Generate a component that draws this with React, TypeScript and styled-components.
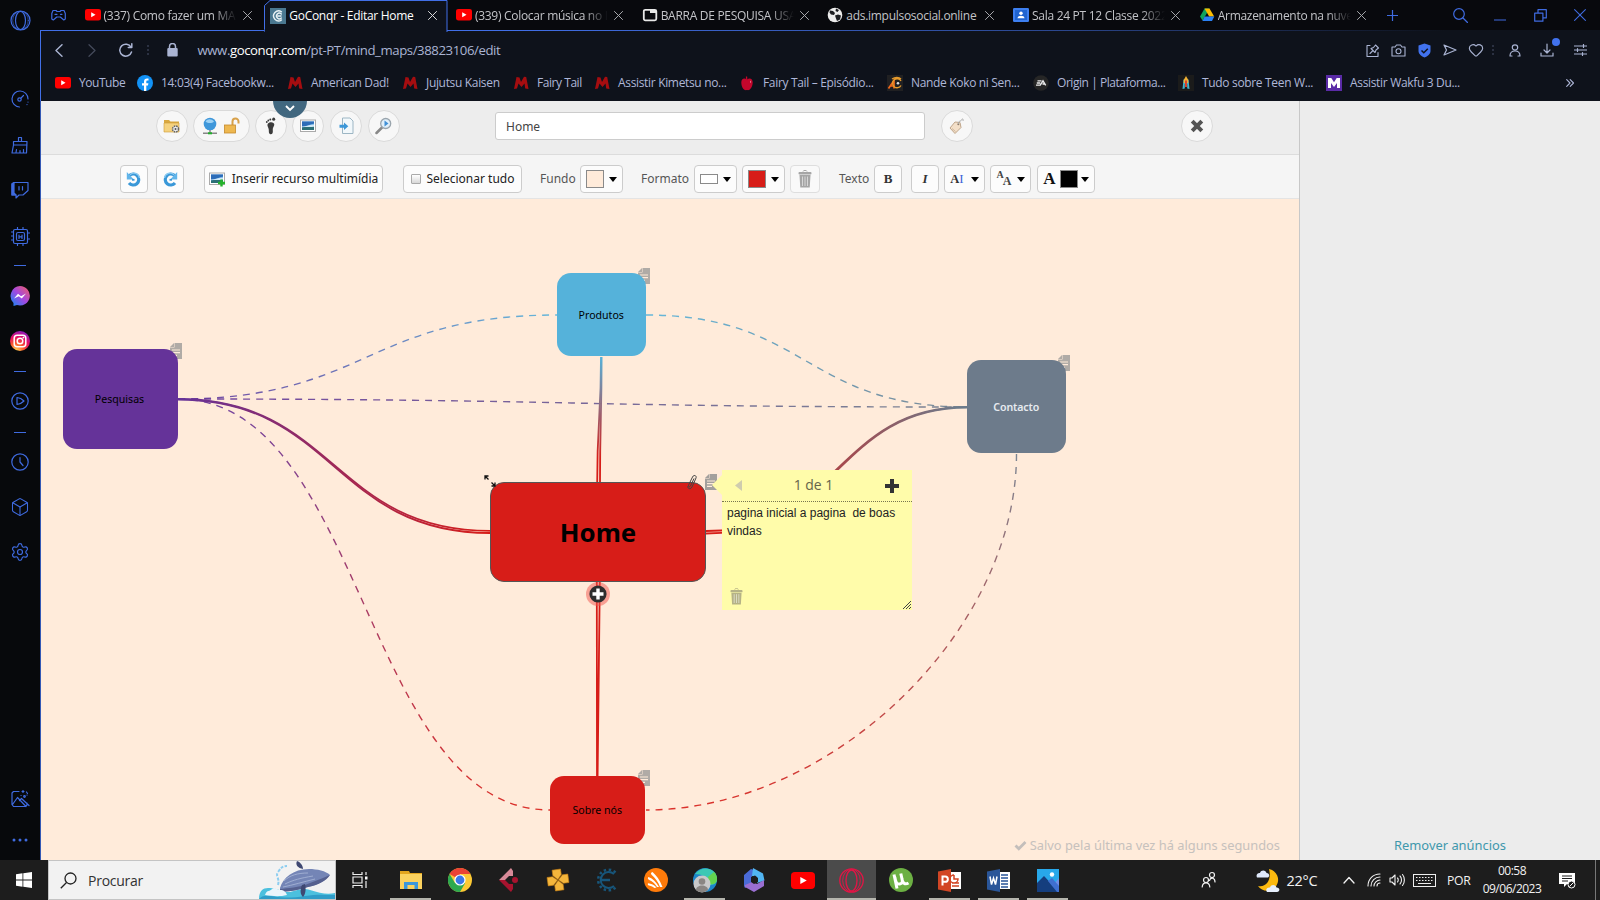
import React from "react";
import styled, { createGlobalStyle, css } from "styled-components";
import { Heart, Settings, Box } from "lucide-react";

const ui = `"Open Sans", "Noto Sans", sans-serif`;
const web = `"Noto Sans", "Open Sans", sans-serif`;
const accent = "#3f6be0";

const Global = createGlobalStyle`
  * { box-sizing: border-box; }
  html, body { margin: 0; padding: 0; overflow: hidden; background: #08090d; }
  svg { display: block; flex: none; }
`;

const Desktop = styled.div`
  width: 1600px; height: 900px; display: flex; flex-direction: column;
  font-family: ${ui}; overflow: hidden;
`;
const Browser = styled.div`display: flex; height: 860px;`;
const Sidebar = styled.nav`
  width: 40px; flex: none; background: #07090c; display: flex; flex-direction: column; align-items: center; color: ${accent};
`;
const SideItem = styled.div<{ $mt: number }>`
  height: 20px; width: 22px; margin-top: ${p => p.$mt}px; display: flex; align-items: center; justify-content: center;
`;
const SideRule = styled.hr`width: 12px; height: 1px; border: 0; margin: 0; background: ${accent};`;
const Window = styled.div`flex: 1; min-width: 0; display: flex; flex-direction: column;`;

const TabStrip = styled.div`height: 30px; background: #08090d; display: flex; align-items: stretch;`;
const GameCorner = styled.div`width: 38.6px; flex: none; padding-right: 2px; display: flex; align-items: center; justify-content: center; color: ${accent};`;
const Tab = styled.div<{ $active?: boolean }>`
  width: 185.7px; flex: none; padding-left: 6px; display: flex; align-items: center; position: relative;
  color: ${p => (p.$active ? "#fff" : "#c3c4c8")};
  ${p => p.$active && css`height: 31px; z-index: 2;`}
`;
const TabShape = styled.svg`position: absolute; left: 0; top: 0; z-index: -1;`;
const TabTitle = styled.span<{ $fade?: boolean }>`
  width: 133px; margin-left: 3px; font-size: 12px; line-height: 18px; white-space: nowrap; overflow: hidden;
  letter-spacing: -.29px; padding-top: 1px;
  ${p => p.$fade && css`-webkit-mask-image: linear-gradient(90deg, #000 82%, transparent 100%); mask-image: linear-gradient(90deg, #000 82%, transparent 100%);`}
`;
const TabClose = styled.div`margin-left: 6px; opacity: .85;`;
const WindowControls = styled.div`display: flex; align-items: center; color: ${accent}; margin-left: 6px;`;
const Control = styled.div<{ $ml: number }>`width: 16px; height: 30px; display: flex; align-items: center; justify-content: center; margin-left: ${p => p.$ml}px;`;

const Chrome = styled.div`
  height: 71px; background: #0e121b; border-left: 1px solid ${accent}; display: flex; flex-direction: column;
  border-top: 1px solid transparent; border-image: linear-gradient(90deg, #416fe8 0, #416fe8 30%, #2b478f 65%, #0e121b 90%) 1; border-right: 0; border-bottom: 0;
`;
const AddressRow = styled.div`height: 38px; display: flex; align-items: center; color: #aab4d3; padding-left: 9.5px;`;
const Slot = styled.div<{ $w?: number; $ml?: number }>`
  width: ${p => p.$w ?? 16}px; margin-left: ${p => p.$ml ?? 0}px; flex: none; display: flex; justify-content: center; align-items: center; position: relative;
`;
const Url = styled.div`
  width: 1147px; margin-left: 17px; font-size: 13.2px; letter-spacing: -.42px; white-space: nowrap; line-height: 20px;
  b { font-weight: 400; color: #fff; }
`;
const Separator = styled.i`width: 2px; height: 11px; background: repeating-linear-gradient(#2b3142 0 2px, transparent 2px 4px);`;
const Badge = styled.i`position: absolute; width: 8px; height: 8px; border-radius: 50%; background: #4172ee; right: -5px; top: -5px;`;

const Bookmarks = styled.div`height: 30px; display: flex; align-items: center; padding-left: 14px; color: #aeb7d8; margin-top: -1px;`;
const Bookmark = styled.div<{ $w: number; $ls?: number }>`
  display: flex; align-items: center; gap: 8px; width: ${p => p.$w}px; flex: none; white-space: nowrap; font-size: 12px;
  line-height: 18px; letter-spacing: ${p => p.$ls ?? -.33}px;
`;

const Page = styled.div`flex: 1; min-height: 0; display: flex; border-left: 1px solid #3459b5; font-family: ${web};`;
const Editor = styled.main`width: 1258px; display: flex; flex-direction: column; flex: none;`;
const AdsPanel = styled.aside`
  flex: 1; background: #ececec; border-left: 1px solid #c8c8c8; display: flex; align-items: flex-end; justify-content: center;
  padding: 0 0 5px 0; color: #3f98ac; font-size: 12.900px; line-height: 20px;
`;
const Header = styled.header`
  height: 54px; background: #ededed; border-bottom: 1px solid #dcdcdc; display: flex; padding: 9px 0 0 115px; position: relative; flex: none;
`;
const Round = styled.div<{ $w?: number; $ml?: number }>`
  width: ${p => p.$w ?? 32}px; height: 32px; border-radius: 16px; border: 1px solid #dadada; background: #f7f7f7; margin-left: ${p => p.$ml ?? 5}px;
  display: flex; align-items: center; justify-content: center; gap: 3px; flex: none;
`;
const PullTab = styled.div`
  position: absolute; left: 232px; top: 0; width: 34px; height: 17px; border-radius: 0 0 17px 17px; background: #41677f;
  display: flex; align-items: center; justify-content: center; padding-bottom: 2px;
`;
const TitleField = styled.div`
  width: 430px; height: 28px; margin: 2px 0 0 95px; border: 1px solid #ccc; border-radius: 3px; background: #fff; flex: none;
  font-size: 12px; line-height: 27px; padding-left: 10px; color: #444;
`;
const Toolbar = styled.div`
  height: 44px; background: #f5f5f5; border-bottom: 1px solid #e4e4e4; display: flex; padding: 10px 0 0 79px; flex: none;
`;
const Button = styled.div<{ $w: number; $ml: number; $gap?: number; $dim?: boolean }>`
  width: ${p => p.$w}px; height: 28px; margin-left: ${p => p.$ml}px; border: 1px solid ${p => (p.$dim ? "#dedede" : "#ccc")}; border-radius: 4px;
  background: ${p => (p.$dim ? "#f9f9f9" : "#fcfcfc")}; display: flex; align-items: center; justify-content: center; gap: ${p => p.$gap ?? 6}px; flex: none;
  font-size: 12px; color: #222; white-space: nowrap;
`;
const Caption = styled.span`padding-bottom: 1px;`;
const Legend = styled.span<{ $w: number; $ml: number }>`
  width: ${p => p.$w}px; margin-left: ${p => p.$ml}px; font-size: 12px; line-height: 27px; color: #555; white-space: nowrap; flex: none;
`;
const Swatch = styled.i<{ $c: string; $w?: number; $h?: number }>`
  width: ${p => p.$w ?? 18}px; height: ${p => p.$h ?? 18}px; border: 1px solid #8a8a8a; background: ${p => p.$c}; flex: none;
`;
const Caret = styled.i`border: 4px solid transparent; border-top: 5px solid #000; border-bottom: 0; margin: 1px 0 0 -1px; flex: none;`;
const Check = styled.i`width: 10px; height: 10px; border: 1px solid #aaa; border-radius: 1px; background: linear-gradient(#fff, #d8d8d8);`;
const Serif = styled.span<{ $size: number; $it?: boolean; $c?: string; $thin?: boolean }>`
  font: ${p => (p.$it ? "italic " : "")}${p => (p.$thin ? "normal" : "bold")} ${p => p.$size}px "Liberation Serif", serif; color: ${p => p.$c ?? "#333"};
`;
const FontSizes = styled.span`
  font: bold 11px/12px "Liberation Serif", serif; color: #444; display: flex; margin-left: 1px;
  b { margin-top: -3px; font-size: 10px; } i { font-style: normal; font-size: 12px; margin: 3px 0 0 -1px; }
`;

const Canvas = styled.section`flex: 1; position: relative; background: #ffebda; overflow: hidden;`;
const Links = styled.svg`position: absolute; left: 0; top: 0;`;
const Node = styled.div<{ $x: number; $y: number; $w: number; $h: number; $c: string; $big?: boolean; $light?: boolean; $pr?: number }>`
  position: absolute; left: ${p => p.$x}px; top: ${p => p.$y}px; width: ${p => p.$w}px; height: ${p => p.$h}px; border-radius: 14px;
  background: ${p => p.$c}; display: flex; align-items: center; justify-content: center; color: ${p => (p.$light ? "#e6eaef" : "#000")};
  font-size: 10.6px; font-weight: ${p => (p.$light ? 600 : 400)}; padding-right: ${p => p.$pr ?? 0}px; letter-spacing: ${p => (p.$light ? -.1 : 0)}px;
  ${p => p.$big && css`border: 1px solid #555; font-size: 25.800px; font-weight: 700; padding: 0;`}
`;
const Pin = styled.div<{ $x: number; $y: number }>`position: absolute; left: ${p => p.$x}px; top: ${p => p.$y}px;`;
const Sticky = styled.div`
  position: absolute; left: 681px; top: 271px; width: 190px; height: 140px; background: #fffcaa; display: flex; flex-direction: column;
  &::before { content: ""; position: absolute; left: -10px; top: 5px; border: 10px solid transparent; border-right-color: #fffcaa; border-left: 0; }
`;
const StickyHead = styled.div`
  height: 32px; flex: none; border-bottom: 1px dotted #77754f; display: flex; align-items: center; justify-content: space-between; padding: 0 13px 0 13px;
  font-size: 14px; color: #66644b;
  span { padding-bottom: 2px; font-family: ${ui}; }
`;
const StickyText = styled.p`
  margin: 0; flex: 1; padding: 2px 5px 2px 5px; font: 12px/18px "Liberation Sans", Arial, sans-serif; color: #222; white-space: pre-wrap;
`;
const StickyFoot = styled.div`display: flex; justify-content: space-between; align-items: flex-end; padding: 0 1px 1px 8px;`;
const Bin = styled.div`padding-bottom: 4px;`;
const Status = styled.div`
  position: absolute; right: 19px; bottom: 5px; display: flex; align-items: center; gap: 3px; font-size: 12.850px; line-height: 20px; color: #c6c1bd; white-space: nowrap;
`;

const Taskbar = styled.footer`height: 40px; background: #1d1d1d; display: flex; color: #f2f2f2; overflow: hidden;`;
const Start = styled.div`width: 48px; display: flex; align-items: center; justify-content: center;`;
const Search = styled.div`
  width: 288px; background: #f2f2f2; border: 1px solid #c4c4c4; display: flex; align-items: center; padding-left: 11px; font-size: 14px; color: #333;
  span { margin-left: 11px; flex: 1; letter-spacing: -.25px; }
`;
const TaskItem = styled.div<{ $line?: boolean; $on?: boolean; $first?: boolean }>`
  width: ${p => (p.$first ? 50 : 49)}px; padding-right: ${p => (p.$first ? 3 : 0)}px; flex: none; display: flex; align-items: center; justify-content: center; position: relative;
  background: ${p => (p.$on ? "#4b4b4b" : "none")};
  ${p => p.$line && css`&::after { content: ""; position: absolute; left: ${p.$on ? 0 : 4}px; right: ${p.$on ? 0 : 4}px; bottom: 0; height: 2px; background: #b5b5ad; }`}
`;
const Tray = styled.div`flex: 1; display: flex; align-items: center; padding-left: 129px;`;
const TrayText = styled.span<{ $ml: number; $w: number; $size: number }>`
  font-size: ${p => p.$size}px; margin-left: ${p => p.$ml}px; width: ${p => p.$w}px; flex: none; letter-spacing: -.3px; white-space: nowrap;
`;
const ClockBox = styled.div`
  width: 70px; margin-left: 6px; text-align: center; font-size: 12px; line-height: 18px; letter-spacing: -.5px;
`;
const ShowDesktop = styled.i`width: 1px; height: 40px; background: #777; margin-left: auto; margin-right: 4px;`;

const s = (w = 1.2) => ({ fill: "none", stroke: "currentColor", strokeWidth: w, strokeLinecap: "round" as const, strokeLinejoin: "round" as const });

const Cross = ({ size = 9, w = 1.1 }: { size?: number; w?: number }) => (
  <svg width={size} height={size} viewBox="0 0 10 10" {...s(w)}><path d="M.5 .5l9 9M9.500 .5l-9 9" /></svg>
);
const YouTube = ({ w = 16, h = 11.5 }: { w?: number; h?: number }) => (
  <svg width={w} height={h} viewBox="0 0 16 12" preserveAspectRatio="none"><rect width="16" height="12" rx="2.600" fill="#f00" /><path d="M6.200 3.500v5l4.300-2.500z" fill="#fff" /></svg>
);
const ConqrIcon = () => (
  <svg width="16" height="16" viewBox="0 0 16 16"><rect width="16" height="16" fill="#4a7891" /><g {...s(1.4)} stroke="#e8f1f5"><path d="M11.500 3.800A5 5 0 1 0 11.500 12M11.300 6A2.800 2.800 0 1 0 11.300 10M8 8h3" /></g></svg>
);
const WindowIcon = () => (
  <svg width="16" height="16" viewBox="0 0 16 16"><rect x="1.800" y="2.800" width="12.500" height="10.500" rx="1.500" fill="none" stroke="#e8e8e8" strokeWidth="1.800" /><path d="M8 3h6v3H8z" fill="#e8e8e8" /></svg>
);
const GlobeDark = () => (
  <svg width="16" height="16" viewBox="0 0 16 16"><circle cx="8" cy="8" r="7.300" fill="#ececec" /><path d="M3 3.500l3 .5 2 2-1 2-3-.5-1.500-2zM8 8.500l3-1 3 1-1 4-3 1.500-1-2.500zM9 1.500l3 1.500-1.500 2L8.500 4z" fill="#1b1c20" /></svg>
);
const Classroom = () => (
  <svg width="16" height="16" viewBox="0 0 16 16"><rect y="1" width="16" height="14" rx="1.200" fill="#3d7ff0" /><rect x="2" y="3" width="12" height="10" fill="#2064d0" /><circle cx="8" cy="6.200" r="1.700" fill="#fff" /><path d="M4.500 11.200c0-3.300 7-3.300 7 0z" fill="#fff" /></svg>
);
const Drive = () => (
  <svg width="16" height="16" viewBox="0 0 16 16"><path d="M5.500 1.500h5L8 6 3.500 13.500 1 9.500z" fill="#0fa35c" /><path d="M5.500 1.500h5l4.700 8h-5z" fill="#fcbd00" /><path d="M3.400 14l2.200-4.500h9.700L13 14z" fill="#2a81f4" /></svg>
);
const MangaM = () => (
  <svg width="16" height="16" viewBox="0 0 16 16"><path d="M1 14L3.500 2l3 .5L8 7l3-5.200 2.200.2L15.500 14l-3.300-.5-.7-5L8.500 12 5.500 8.500 4 13.500z" fill="#a50d10" /></svg>
);
const Facebook = () => (
  <svg width="16" height="16" viewBox="0 0 16 16"><circle cx="8" cy="8" r="8" fill="#1292f6" /><path d="M7 16v-5.500H5V8.200h2V6.500C7 4.500 8.200 3.400 10 3.400l1.500.1v2h-1C9.600 5.500 9.300 6 9.300 6.700v1.500h2.100l-.4 2.300H9.300V16z" fill="#fff" /></svg>
);
const Apple = () => (
  <svg width="16" height="16" viewBox="0 0 16 16"><path d="M8 4.500c3-2 5.700-.5 5.700 3 0 3.500-2.200 8.500-5.700 7.500-3.500 1-5.700-3.500-5.700-7.500C2.300 4 5 2.500 8 4.500z" fill="#c4062c" /><path d="M7.800 5.200L7.500 1.500" stroke="#c4062c" strokeWidth="1.300" /><path d="M11 5.500l1.200 1.500-1 1z" fill="#f0a6b4" /></svg>
);
const AnimeC = () => (
  <svg width="16" height="16" viewBox="0 0 16 16"><rect width="16" height="16" fill="#202022" /><path d="M1.500 13.500L7 5.500v8M3 11h4" fill="none" stroke="#f0681c" strokeWidth="1.700" /><path d="M14 10.500A4.500 4.500 0 1 1 14 6M5 4c3-2 7-2 9 0" fill="none" stroke="#e59a2c" strokeWidth="1.400" /><circle cx="11" cy="8.300" r="1.300" fill="#ddd" /></svg>
);
const EA = () => (
  <svg width="16" height="16" viewBox="0 0 16 16"><circle cx="8" cy="8" r="7.800" fill="#262626" /><path d="M4.500 5.800h4M3.800 8h3.500M3 10.200h4.300L10 5.800l2.700 4.500M9.500 9h2.500" fill="none" stroke="#eee" strokeWidth="1.300" /></svg>
);
const Rocket = () => (
  <svg width="16" height="16" viewBox="0 0 16 16"><rect width="16" height="16" fill="#1b1b1b" /><path d="M5.500 4.500L4.500 14l2.300-.5V9h2.400v4.500l2.300.5-1-9.500z" fill="#45b3c9" /><path d="M8 1l2.300 4V8H5.700V5z" fill="#f2b134" /><path d="M7 5.500h2V12H7z" fill="#d8422d" /></svg>
);
const PurpleM = () => (
  <svg width="16" height="16" viewBox="0 0 16 16"><rect width="16" height="16" fill="#5a2ba6" /><path d="M2 13V3h3.300L8 7.200 10.700 3H14v10h-3V8L8 12 5 8v5z" fill="#fff" /></svg>
);

const tabs = [
  { t: "(337) Como fazer um MA", i: <YouTube />, fade: true },
  { t: "GoConqr - Editar Home", i: <ConqrIcon />, active: true },
  { t: "(339) Colocar música no I", i: <YouTube />, fade: true },
  { t: "BARRA DE PESQUISA USA", i: <WindowIcon />, fade: true },
  { t: "ads.impulsosocial.online", i: <GlobeDark /> },
  { t: "Sala 24 PT 12 Classe 2022", i: <Classroom />, fade: true },
  { t: "Armazenamento na nuve", i: <Drive />, fade: true },
];

const bookmarks = [
  { t: "YouTube", i: <YouTube />, w: 82, ls: -.45 },
  { t: "14:03(4) Facebookw...", i: <Facebook />, w: 150 },
  { t: "American Dad!", i: <MangaM />, w: 115 },
  { t: "Jujutsu Kaisen", i: <MangaM />, w: 111 },
  { t: "Fairy Tail", i: <MangaM />, w: 81, ls: -.45 },
  { t: "Assistir Kimetsu no...", i: <MangaM />, w: 145 },
  { t: "Fairy Tail – Episódio...", i: <Apple />, w: 148 },
  { t: "Nande Koko ni Sen...", i: <AnimeC />, w: 146 },
  { t: "Origin | Plataforma...", i: <EA />, w: 145, ls: -.45 },
  { t: "Tudo sobre Teen W...", i: <Rocket />, w: 148 },
  { t: "Assistir Wakfu 3 Du...", i: <PurpleM />, w: 240 },
];

const NoteIcon = ({ dark }: { dark?: boolean }) => (
  <svg width="12" height="16" viewBox="0 0 12 16" opacity={dark ? 1 : .85}>
    <path d="M4.500 0H12v16H0V4.500h4.500z" fill="#a3a09d" /><path d="M0 4L4 0v4z" fill="#a3a09d" />
    <path d="M2 7h8M2 9.700h8M2 12.400h5" stroke="#ffebda" strokeWidth="1.200" />
  </svg>
);
const Trash = ({ c = "#999", w = 14, h = 18 }: { c?: string; w?: number; h?: number }) => (
  <svg width={w} height={h} viewBox="0 0 14 18"><path d="M5 1.500c0-1.500 4-1.500 4 0" stroke={c} fill="none" /><rect x=".5" y="2" width="13" height="2.500" rx="1" fill={c} /><path d="M1.500 5h11l-.8 12.500H2.300z" fill={c} /><path d="M4.500 6.500v9.500M7 6.500v9.500M9.500 6.500v9.500" stroke="#fff" strokeOpacity=".55" /></svg>
);
const Landscape = ({ plus }: { plus?: boolean }) => (
  <svg width="17" height="16" viewBox="0 0 17 16">
    <rect x=".5" y="2" width="15" height="11.500" fill="#fff" stroke="#aaa" /><rect x="2" y="3.500" width="12" height="8.500" fill="#5ea4de" />
    <path d="M2 3.500h12v2c-5 1-8 3.500-12 3.500z" fill="#2c6cb8" /><path d="M2 8.500c4 0 8-2 12-2v2.500H2z" fill="#cfe8f7" /><path d="M2 9.500c5-1 8 0 12-.8V12H2z" fill="#2b6f75" />
    {plus && <path d="M12.500 8.500v7M9 12h7" stroke="#25b32b" strokeWidth="2.400" />}
  </svg>
);
const Turn = ({ flip }: { flip?: boolean }) => (
  <svg width="16" height="17" viewBox="0 0 16 17"><g transform={flip ? "matrix(-1 0 0 1 16 0)" : undefined}>
    <path d="M3.500 4.500A5.500 5.500 0 1 1 3 12" fill="none" stroke="#3a98d8" strokeWidth="3.200" /><path d="M4 3.800A5.600 5.600 0 0 1 13.500 7" fill="none" stroke="#8bcbf2" strokeWidth="1.300" />
    <path d="M.8 1v7.500h7z" fill="#62b5ea" /><path d="M6 8.800h2.500" stroke="#3a98d8" strokeWidth="1.800" />
  </g></svg>
);

/* One gradient per connection, following the colours of the two nodes it joins. */
const purple = "#653399", blue = "#55b2da", slate = "#6d7b8b", red = "#d71d18";
const gradients: [string, number, number, number, number, string, string][] = [
  ["pb", 137, 0, 516, 0, purple, blue], ["pc", 137, 0, 926, 0, purple, slate], ["ps", 0, 200, 0, 611, purple, red],
  ["bc", 605, 0, 926, 0, blue, slate], ["cs", 0, 255, 0, 611, slate, red], ["ph", 137, 0, 449, 0, purple, red],
  ["bh", 0, 158, 0, 260, blue, red], ["hc", 700, 0, 915, 0, red, slate],
];
const dashed = [
  ["pb", "M137 200C326 200 326 116 516 116"], ["pc", "M137 200C531 200 531 208 926 208"], ["ps", "M137 200C323 200 323 611 509 611"],
  ["bc", "M605 116C765 116 765 208 926 208"], ["cs", "M975.500 255C975.500 433 790 611 605 611"],
];
const solid = [
  ["ph", "M137 200C293 200 293 331.800 449 331.800"], ["ph", "M137 200.500C293 200.500 293 334 449 334"],
  ["bh", "M560 158C560 220 556.200 220 556.200 284"], ["bh", "M560.600 158C560.600 220 559 220 559 284"],
  ["hc", "M926 208C796 208 796 332 665 332"], ["hc", "M926 208.500C796 208.500 796 334.500 665 334.500"],
];

export default function App() {
  return (
    <Desktop>
      <Global />
      <Browser>
        <Sidebar>
          <SideItem $mt={10}><svg width="21" height="21" viewBox="0 0 21 21" {...s()}><circle cx="10.500" cy="10.500" r="9.500" /><ellipse cx="10.500" cy="10.500" rx="5" ry="9" /><ellipse cx="10.500" cy="10.500" rx="7.800" ry="9.200" strokeWidth=".6" /></svg></SideItem>
          <SideItem $mt={59}><svg width="18" height="18" viewBox="0 0 18 18" {...s()}><path d="M8.500 17A8 8 0 1 1 17 9" /><circle cx="8.500" cy="9.500" r="1.700" /><path d="M10 8l2.500-2.500M17 12v.1M16 14.500v.1" /></svg></SideItem>
          <SideItem $mt={26}><svg width="18" height="18" viewBox="0 0 18 18" {...s()}><path d="M7.500 5.500V1.500h3v4M2.500 5.500h13.500l-.5 11.500H1L2.500 9zM2.500 9h13.500M5 16.500l.5-3M9 16.500v-2M12.500 16.500v-3" /></svg></SideItem>
          <SideItem $mt={25}><svg width="18" height="18" viewBox="0 0 18 18" {...s()}><path d="M1 2.500v11.500h4v3l3-3h4l5-4.500V1.500H3.500zM8 5.500v3.500M11.500 5.500v3.500" /><path d="M3 1.500L1 3.500V14h4l-2-2z" fill="currentColor" /></svg></SideItem>
          <SideItem $mt={26}><svg width="19" height="19" viewBox="0 0 19 19" {...s()}><rect x="2.500" y="2.500" width="14" height="14" rx="1.500" /><rect x="5.500" y="5.500" width="8" height="8" rx="1.500" /><path d="M8 8v3.500M11 8v3.500M8 9.800h3M6.500.5v2M12 .5v2M6.500 16.500v2M12 16.500v2M.5 5h2M.5 9h2M.5 13h2M16.500 6h2M16.500 12h2" /></svg></SideItem>
          <SideItem $mt={9}><SideRule /></SideItem>
          <SideItem $mt={11}><svg width="20" height="20" viewBox="0 0 20 20"><defs><linearGradient id="ms" x1="1" y1="0" x2="0" y2="1"><stop offset="0" stopColor="#f5605f" /><stop offset=".5" stopColor="#a347e0" /><stop offset="1" stopColor="#0c8bf5" /></linearGradient></defs><path d="M10 0a10 9.700 0 1 1-3 19L3.500 20v-3A10 10 0 0 1 10 0z" fill="url(#ms)" /><path d="M4 12.500l4-4.800 3 2.500 5-2.700-4.200 5-3-2.300z" fill="#fff" /></svg></SideItem>
          <SideItem $mt={25}><svg width="20" height="20" viewBox="0 0 20 20"><defs><radialGradient id="ig" cx=".3" cy="1" r="1.100"><stop offset="0" stopColor="#fd5" /><stop offset=".35" stopColor="#fb5a2e" /><stop offset=".65" stopColor="#e30c68" /><stop offset="1" stopColor="#7b1fd0" /></radialGradient></defs><circle cx="10" cy="10" r="10" fill="url(#ig)" /><g fill="none" stroke="#fff" strokeWidth="1.500"><rect x="4.200" y="4.200" width="11.600" height="11.600" rx="3" /><circle cx="10" cy="10" r="2.800" /></g><circle cx="13.400" cy="6.600" r=".9" fill="#fff" /></svg></SideItem>
          <SideItem $mt={10}><SideRule /></SideItem>
          <SideItem $mt={10}><svg width="18" height="18" viewBox="0 0 18 18" {...s()}><circle cx="9" cy="9" r="8.200" /><path d="M6 5.500c3 .3 5 1.500 7 3.500-2 2-4 3-7 3.500z" /></svg></SideItem>
          <SideItem $mt={11}><SideRule /></SideItem>
          <SideItem $mt={10}><svg width="18" height="18" viewBox="0 0 18 18" {...s()}><circle cx="9" cy="9" r="8.200" /><path d="M9 4.500V9l3 3.500" /></svg></SideItem>
          <SideItem $mt={25}><Box size={20} strokeWidth={1.300} /></SideItem>
          <SideItem $mt={25}><Settings size={20} strokeWidth={1.400} /></SideItem>
          <SideItem $mt={227}><svg width="19" height="18" viewBox="0 0 19 18" {...s()}><path d="M8 1.500H2.500L1 3v11.500L2.500 16.500h12l1.500-1.500v-2M1.500 14.500l5-7 8.500 9M8.500 10.500l2-2 7.500 7M11 1.500h2M12 .5v2M16 5v.1M10 5.500h.1M15.500 2l1 1.500" /><circle cx="13.500" cy="6.500" r=".8" /></svg></SideItem>
          <SideItem $mt={21}><svg width="16" height="4" viewBox="0 0 16 4" fill="currentColor"><circle cx="2" cy="2" r="1.500" /><circle cx="8" cy="2" r="1.500" /><circle cx="14" cy="2" r="1.500" /></svg></SideItem>
        </Sidebar>

        <Window>
          <TabStrip>
            <GameCorner><svg width="15" height="12" viewBox="0 0 15 12" {...s()}><path d="M2 1.500h3l1 1h3l1-1h3l1.300 3v5.500l-1.500 1-3.500-3h-3.500l-3.500 3-1.500-1V4.500z" /><path d="M4 5.300h2M9.500 5.300h1.500" /></svg></GameCorner>
            {tabs.map(x => (
              <Tab key={x.t} $active={x.active}>
                {x.active && <TabShape width="186" height="32" viewBox="0 0 186 32"><path d="M0 32L.5 29.500V5.500L6 .5H183V32" fill="#0e121b" stroke="#416fe8" /></TabShape>}
                {x.i}
                <TabTitle $fade={x.fade}>{x.t}</TabTitle>
                <TabClose><Cross /></TabClose>
              </Tab>
            ))}
            <WindowControls>
              <Control $ml={0}><svg width="11" height="11" viewBox="0 0 11 11" {...s()}><path d="M5.500 0v11M0 5.500h11" /></svg></Control>
              <Control $ml={52}><svg width="15" height="15" viewBox="0 0 15 15" {...s()}><circle cx="6" cy="6" r="5.300" /><path d="M10 10l4.500 4.500" /></svg></Control>
              <Control $ml={24}><svg width="12" height="12" viewBox="0 0 12 12" {...s()}><path d="M.5 11h11" /></svg></Control>
              <Control $ml={24}><svg width="13" height="13" viewBox="0 0 13 13" {...s()}><path d="M.7 4.200h8.200v8H.7zM4 4V.7h8.300v8.200H9" /></svg></Control>
              <Control $ml={24}><Cross size={12} w={.9} /></Control>
            </WindowControls>
          </TabStrip>

          <Chrome>
            <AddressRow>
              <Slot><svg width="8" height="13" viewBox="0 0 8 13" {...s(1.4)}><path d="M7 .7L1 6.500 7 12.300" /></svg></Slot>
              <Slot $ml={17}><svg width="8" height="13" viewBox="0 0 8 13" {...s(1.2)} opacity=".35"><path d="M1 .7l6 5.800-6 5.800" /></svg></Slot>
              <Slot $ml={18}><svg width="14" height="14" viewBox="0 0 14 14" {...s(1.500)}><path d="M12.500 9A6 6 0 1 1 12 4.200M12.800.8v3.700H9.300" /></svg></Slot>
              <Slot $w={4} $ml={12}><Separator /></Slot>
              <Slot $ml={15}><svg width="11" height="14" viewBox="0 0 11 14"><path d="M2.500 6V3.500a3 3 0 0 1 6 0V6" fill="none" stroke="#aab4d3" strokeWidth="1.500" /><rect x=".3" y="5" width="10.400" height="8.500" rx="1" fill="#aab4d3" /></svg></Slot>
              <Url>www.<b>goconqr.com</b>/pt-PT/mind_maps/38823106/edit</Url>
              <Slot $ml={20}><svg width="14" height="14" viewBox="0 0 14 14" {...s(1.100)}><path d="M4 2.500H1v11h11v-4M4 10.500l3-3M5 5.500L9 9.500l1-2.500 2.500-2L9.500 2 7.500 4.500z" /></svg></Slot>
              <Slot $ml={9.5}><svg width="15" height="13" viewBox="0 0 15 13" {...s(1.100)}><path d="M1 3h3l1.500-2h4L11 3h3v9H1z" /><circle cx="7.500" cy="7.200" r="2.500" /></svg></Slot>
              <Slot $ml={10}><svg width="13" height="15" viewBox="0 0 13 15"><path d="M6.500.5l6 2v5.500c0 3-3 5.500-6 6.500C3.500 13.500.5 11 .5 8V2.500z" fill="#4172ee" /><path d="M3.500 7.500l2.300 2.200 4-4" fill="none" stroke="#0e121b" strokeWidth="1.500" /></svg></Slot>
              <Slot $ml={10}><svg width="14" height="12" viewBox="0 0 14 12" {...s(1.200)}><path d="M1 1l12 5-12 5 2.500-5z" /></svg></Slot>
              <Slot $ml={10}><Heart size={16} strokeWidth={1.700} /></Slot>
              <Slot $w={4} $ml={7}><Separator /></Slot>
              <Slot $ml={12}><svg width="12" height="13" viewBox="0 0 12 13" {...s(1.200)}><circle cx="6" cy="3.500" r="2.700" /><path d="M1 12c0-3 1.500-5 5-5s5 2 5 5M1 12h2M9 12h2" /></svg></Slot>
              <Slot $ml={16}><svg width="14" height="14" viewBox="0 0 14 14" {...s(1.200)}><path d="M1 10v3h12v-3M7 1v9M4 7l3 3 3-3" /></svg><Badge /></Slot>
              <Slot $ml={17.5}><svg width="13" height="12" viewBox="0 0 13 12" {...s(1.200)}><path d="M.5 2h12M.5 6h12M.5 10h12M9.500 .5v3M3.500 4.500v3M8.500 8.500v3" /></svg></Slot>
            </AddressRow>
            <Bookmarks>
              {bookmarks.map(b => <Bookmark key={b.t} $w={b.w} $ls={b.ls}>{b.i}<span>{b.t}</span></Bookmark>)}
              <svg width="8" height="8" viewBox="0 0 8 8" {...s(1.100)}><path d="M.7.7L4 4 .7 7.300M4.200.7L7.500 4 4.200 7.300" /></svg>
            </Bookmarks>
          </Chrome>

          <Page>
            <Editor>
              <Header>
                <Round $ml={0}><svg width="18" height="16" viewBox="0 0 18 16"><path d="M1 2h5l1.500 1.500H16V14H1z" fill="#d9a840" /><path d="M1 5h15v9H1z" fill="#f5d27e" stroke="#cf9b35" strokeWidth=".6" /><circle cx="12.500" cy="11" r="3" fill="#eee" stroke="#666" strokeWidth="1.500" strokeDasharray="1.600 .8" /><circle cx="12.500" cy="11" r="1" fill="#555" /></svg></Round>
                <Round $w={57}><svg width="18" height="18" viewBox="0 0 18 18"><circle cx="8" cy="7" r="6.300" fill="#3f97da" /><path d="M3.500 4.500c2-3 6-3 8.500 0-2 2-6 2-8.500 0z" fill="#9dd2f5" /><path d="M8 13v3M1 16.300h14" stroke="#888" strokeWidth="1.500" /><path d="M6 15.300h4v2H6z" fill="#1eae28" /></svg>
                  <svg width="18" height="18" viewBox="0 0 18 18"><path d="M9.500 8V4.500a3 3 0 0 1 6 0V6.500" fill="none" stroke="#d8a14a" strokeWidth="2" /><rect x="1.500" y="8" width="11" height="8" fill="#eeb850" stroke="#c58a2c" strokeWidth=".8" /></svg></Round>
                <Round><svg width="12" height="18" viewBox="0 0 12 18" fill="#3d3d3d"><path d="M3 6.500C5 4.500 9.500 5 9.300 7.800c-.2 2-2 3-1.500 5.700.3 2.500-.5 4-2.300 3.800-2-.3-1.500-3-1.800-5C3.500 10 1.500 8.500 3 6.500z" /><circle cx="1.800" cy="5" r=".9" /><circle cx="3.300" cy="3.500" r=".9" /><circle cx="5.300" cy="2.500" r="1" /><ellipse cx="8.700" cy="2.200" rx="1.500" ry="1.600" /></svg></Round>
                <Round><Landscape /></Round>
                <Round $ml={6}><svg width="17" height="18" viewBox="0 0 17 18"><path d="M4.500 1h7.500l3 3v12.500H4.500z" fill="#f2f8fb" stroke="#9db6c4" /><path d="M1.500 7.800h4.500V5.500l4.300 3.800L6 13v-2.200H1.500z" fill="#3c97d8" /></svg></Round>
                <Round $ml={6}><svg width="18" height="18" viewBox="0 0 18 18"><path d="M1.500 16L7.500 10" stroke="#888" strokeWidth="2.500" strokeLinecap="round" /><circle cx="10.700" cy="6.500" r="5" fill="#e0effa" stroke="#9aa5ad" strokeWidth="1.300" /><path d="M9.500 3.500l4 3-4 3z" fill="#3f8fd6" /></svg></Round>
                <TitleField>Home</TitleField>
                <Round $ml={16}><svg width="18" height="18" viewBox="0 0 18 18"><path d="M2 11l5-6 5 .5 1 5-6 6z" fill="#f3dfc8" stroke="#bfa58a" /><circle cx="10.300" cy="7.300" r="1" fill="#8c7a68" /><path d="M10.500 7c0-4 2-2 3-4s2-1 1.500 1" fill="none" stroke="#aaa" /><path d="M4 11.500l3.500 3" stroke="#cdb69c" /></svg></Round>
                <Round $ml={208}><svg width="14" height="14" viewBox="0 0 14 14"><path d="M2.200 2.200l9.600 9.600M11.800 2.200l-9.600 9.600" stroke="#555" strokeWidth="4" /></svg></Round>
                <PullTab><svg width="10" height="7" viewBox="0 0 10 7"><path d="M1 1l4 4 4-4" fill="none" stroke="#fff" strokeWidth="1.900" /></svg></PullTab>
              </Header>
              <Toolbar>
                <Button $w={28} $ml={0}><Turn /></Button>
                <Button $w={28} $ml={8}><Turn flip /></Button>
                <Button $w={179} $ml={20}><Landscape plus /><Caption>Inserir recurso multimídia</Caption></Button>
                <Button $w={119} $ml={20}><Check /><Caption>Selecionar tudo</Caption></Button>
                <Legend $w={35} $ml={18}>Fundo</Legend>
                <Button $w={43} $ml={5}><Swatch $c="#ffebda" /><Caret /></Button>
                <Legend $w={48} $ml={18}>Formato</Legend>
                <Button $w={43} $ml={5}><Swatch $c="#fff" $h={10} /><Caret /></Button>
                <Button $w={43} $ml={5}><Swatch $c={red} /><Caret /></Button>
                <Button $w={30} $ml={5} $dim><Trash c="#a5a5a5" /></Button>
                <Legend $w={30} $ml={19}>Texto</Legend>
                <Button $w={28} $ml={5}><Serif $size={13}>B</Serif></Button>
                <Button $w={28} $ml={9}><Serif $size={13} $it>I</Serif></Button>
                <Button $w={41} $ml={5} $gap={8}><Serif $size={12.5}>A<Serif as="span" $size={13} $c="#3b62d8" $thin>I</Serif></Serif><Caret /></Button>
                <Button $w={41} $ml={5} $gap={7}><FontSizes><b>A</b><i>A</i></FontSizes><Caret /></Button>
                <Button $w={58} $ml={6} $gap={4}><Serif $size={17} $c="#111">A</Serif><Swatch $c="#000" /><Caret /></Button>
              </Toolbar>
              <Canvas>
                <Links width="1258" height="661" viewBox="0 0 1258 661" fill="none">
                  <defs>
                    {gradients.map(([id, x1, y1, x2, y2, a, b]) => (
                      <linearGradient key={id} id={id} gradientUnits="userSpaceOnUse" x1={x1} y1={y1} x2={x2} y2={y2}><stop offset="0" stopColor={a} /><stop offset="1" stopColor={b} /></linearGradient>
                    ))}
                  </defs>
                  {dashed.map(([g, d]) => <path key={d} d={d} stroke={`url(#${g})`} strokeWidth="1.400" strokeDasharray="7 6" opacity=".9" />)}
                  {solid.map(([g, d]) => <path key={d} d={d} stroke={`url(#${g})`} strokeWidth="1.800" />)}
                  <path d="M555.800 383L556 577M558.800 383L556.600 577" stroke={red} strokeWidth="1.800" />
                </Links>
                <Pin $x={129} $y={144}><NoteIcon /></Pin>
                <Pin $x={597} $y={69}><NoteIcon /></Pin>
                <Pin $x={1017} $y={156}><NoteIcon /></Pin>
                <Pin $x={597} $y={571}><NoteIcon /></Pin>
                <Pin $x={664} $y={275}><NoteIcon dark /></Pin>
                <Node $x={22} $y={150} $w={115} $h={100} $c={purple} $pr={2}>Pesquisas</Node>
                <Node $x={515.500} $y={74} $w={89.500} $h={83} $c={blue}>Produtos</Node>
                <Node $x={926} $y={161} $w={98.500} $h={93} $c={slate} $light>Contacto</Node>
                <Node $x={508.500} $y={577} $w={95.500} $h={68} $c={red}>Sobre nós</Node>
                <Node $x={449} $y={283} $w={216} $h={99.500} $c={red} $big>Home</Node>
                <Pin $x={443} $y={276}><svg width="12" height="12" viewBox="0 0 12 12"><path d="M1 4.500V1h3.500M1 1l3.500 3.500M11 7.500V11H7.500M11 11L7.500 7.500" stroke="#111" strokeWidth="1.300" fill="none" /></svg></Pin>
                <Pin $x={645} $y={275}><svg width="12" height="16" viewBox="0 0 12 16"><path d="M8 4.500L4.500 12c-.8 1.500-2.500.5-2-.8L6.500 3c1.300-2.800 4.500-1.300 3.500 1L6 13c-1.500 3-5 1.500-4-1" fill="none" stroke="#444" strokeWidth="1" /></svg></Pin>
                <Pin $x={545} $y={383}><svg width="24" height="24" viewBox="0 0 24 24"><circle cx="12" cy="12" r="12" fill="#f2564d" opacity=".5" /><circle cx="12" cy="12" r="8.600" fill="#2d2d2d" /><path d="M12 6.500v11M6.500 12h11" stroke="#fff" strokeWidth="3.400" /></svg></Pin>
                <Sticky>
                  <StickyHead>
                    <svg width="7" height="11" viewBox="0 0 7 11"><path d="M7 0v11L0 5.500z" fill="#cfccae" /></svg>
                    <span>1 de 1</span>
                    <svg width="14" height="14" viewBox="0 0 14 14"><path d="M7 0v14M0 7h14" stroke="#333" strokeWidth="4" /></svg>
                  </StickyHead>
                  <StickyText>{"pagina inicial a pagina  de boas\nvindas"}</StickyText>
                  <StickyFoot>
                    <Bin><Trash c="#b5b286" h={17} w={13} /></Bin>
                    <svg width="8" height="8" viewBox="0 0 8 8"><path d="M0 8L8 0M3 8l5-5M6 8l2-2" stroke="#444" /></svg>
                  </StickyFoot>
                </Sticky>
                <Status><svg width="13" height="11" viewBox="0 0 13 11"><path d="M1.500 5.500l3.300 3.300L11.500 2" stroke="#c3bebb" strokeWidth="2.800" fill="none" /></svg>Salvo pela última vez há alguns segundos</Status>
              </Canvas>
            </Editor>
            <AdsPanel>Remover anúncios</AdsPanel>
          </Page>
        </Window>
      </Browser>

      <Taskbar>
        <Start><svg width="16" height="16" viewBox="0 0 16 16" fill="#fff"><path d="M0 2.200L6.500 1.300V7.600H0zM7.300 1.200L16 0v7.600H7.300zM0 8.400h6.500v6.300L0 13.800zM7.300 8.400H16V16l-8.700-1.200z" /></svg></Start>
        <Search>
          <svg width="17" height="17" viewBox="0 0 17 17" fill="none" stroke="#222" strokeWidth="1.300"><circle cx="10.500" cy="6.500" r="5.500" /><path d="M6.500 10.500L.8 16.200" /></svg>
          <span>Procurar</span>
          <svg width="76" height="38" viewBox="0 0 76 38">
            <path d="M0 38c0-8 4-11 9-11 6 0 9 1 14 3 12 4 15-5 28-1 10 3 17 5 25 3v6z" fill="#4cc0de" /><path d="M0 38c2-3 6-4 12-3 14 2 20 2 34 0 12-2 20-1 30-1v4z" fill="#2f9cc8" />
            <path d="M21 27C24 17 34 8 50 8c8 0 17 2 21 6-4 5-12 10-22 12-9 2-19 6-28 4z" fill="#7485b6" /><path d="M21 28c8-1 18-1 30-6 8-3 15-6 20-8-4 6-12 10-22 12-9 2-19 6-28 4z" fill="#55608f" />
            <path d="M25 20c6-6 14-8 24-8M26 23c8-4 16-6 28-8M24 26c10-2 20-5 32-8" stroke="#aab7d8" fill="none" strokeWidth=".8" />
            <path d="M44 8c-5-1-8-4-6-8 3 1 6 4 6 8zM43 24c-2 5-2 9 1 12 3-3 3-9 2-13z" fill="#3e4872" />
            <path d="M19 24c2-7-3-9 0-13s4-6 9-6" stroke="#8ccdf0" strokeWidth="2" fill="none" strokeDasharray="3 1.500" /><path d="M6 34c2-6 5-3 7-6 3-3 5 1 8 1 4 0 6 2 7 5-8 2-15 1-22 0z" fill="#eaf5fb" />
          </svg>
        </Search>
        <TaskItem $first><svg width="16" height="16" viewBox="0 0 16 16" fill="none" stroke="#eee" strokeWidth="1.200"><path d="M1 0v2.500h9V0M1 16v-2.500h9V16M1 5h9v6H1zM14 0v3M14 9v7" /><path d="M13 4.500h2.500v3H13z" fill="#fff" stroke="none" /></svg></TaskItem>
        <TaskItem $line><svg width="22" height="18" viewBox="0 0 22 18"><path d="M0 0h9l1 2h12v16H0z" fill="#e3a51e" /><path d="M0 3h22v15H0z" fill="#fbd25f" /><path d="M4 18v-7h14v7h-3.500v-4h-7v4z" fill="#3b97dc" /></svg></TaskItem>
        <TaskItem><svg width="24" height="24" viewBox="0 0 24 24"><circle cx="12" cy="12" r="12" fill="#fcc934" /><path d="M12 12L1.600 6A12 12 0 0 1 22.400 6H12z" fill="#ea4335" /><path d="M1.600 6A12 12 0 0 0 12 24l5.200-9L12 12 7 15z" fill="#2da94f" /><circle cx="12" cy="12" r="5.600" fill="#fff" /><circle cx="12" cy="12" r="4.400" fill="#3b78e7" /></svg></TaskItem>
        <TaskItem><svg width="20" height="24" viewBox="0 0 20 24"><path d="M12 0L0 12h6l4-4h4V3z" fill="#d88a98" /><path d="M0 12l12 12 2-3V16h-4l-4-4z" fill="#a8142f" /><circle cx="16" cy="12" r="3" fill="#a8142f" /></svg></TaskItem>
        <TaskItem><svg width="24" height="24" viewBox="0 0 24 24"><g fill="#f4b63c" stroke="#c87f12" strokeWidth=".6">{[-8, 82, 172, 262].map(r => <path key={r} transform={`rotate(${r} 12 12)`} d="M12 11.500L7.500 7V1.500h8.500V7z" />)}</g></svg></TaskItem>
        <TaskItem><svg width="22" height="24" viewBox="0 0 22 24"><path d="M18 6A8 8 0 1 0 18 18" fill="none" stroke="#17567b" strokeWidth="2" /><path d="M19.500 4.500A10.300 10.300 0 1 0 19.500 19.500" fill="none" stroke="#17567b" strokeWidth="2.500" strokeDasharray="2.500 2.500" /><path d="M5 12h9" stroke="#17567b" strokeWidth="2.500" /></svg></TaskItem>
        <TaskItem><svg width="24" height="24" viewBox="0 0 24 24"><circle cx="12" cy="12" r="12" fill="#ff7b0a" /><path d="M18.500 19C16 12 12 7 8.500 4c-1.500.5-2 1.500-1 2.700C11 10 14.500 14 16 19zM15 19C12 14 9 10.500 4.500 9c-1 1-.8 2 .3 2.700C9 13.500 11.500 16 13 19zM12.500 19.500C10 17 7.500 15.500 4 15.200c-.5 1 0 2 1 2.300 2.500.5 4 1.200 5.500 2.500z" fill="#fff" /></svg></TaskItem>
        <TaskItem $line><svg width="24" height="25" viewBox="0 0 24 25"><circle cx="12" cy="12" r="12" fill="#1d86c9" /><path d="M2 6C8-3 24-1 24 11c0 5-4 6-8 6 0-8-8-11-14-11z" fill="#3cc8b4" /><path d="M24 11c0 5-5 6-8 5l-1-7 6-5c2 2 3 4 3 7z" fill="#63d44f" /><circle cx="9" cy="16" r="8.500" fill="#c9c9c9" /><circle cx="9" cy="13.500" r="3.300" fill="#8a8683" /><path d="M3 22c0-6 12-6 12 0-3 3-9 3-12 0z" fill="#8a8683" /></svg></TaskItem>
        <TaskItem><svg width="22" height="24" viewBox="0 0 22 24"><path d="M8 1l6 2-5 5v8l-7 4-1-2V7z" fill="#4a6bd8" /><path d="M10 0l10 5.500 1.500 7L14 15V9l-5-1z" fill="#51b5f2" /><path d="M2 17l7-3 5 2 7-4v6l-10 6-9-5z" fill="#9a6fd2" /><path d="M8 9l4-1.500L15 10v4l-4 2-3-2z" fill="#1d1d1d" /></svg></TaskItem>
        <TaskItem><YouTube w={24} h={17} /></TaskItem>
        <TaskItem $line $on><svg width="25" height="25" viewBox="0 0 25 25" fill="none" stroke="#e31445" strokeWidth="1.300"><circle cx="12.500" cy="12.500" r="11.700" /><ellipse cx="12.500" cy="12.500" rx="5.500" ry="10.500" /><ellipse cx="12.500" cy="12.500" rx="8.800" ry="11.300" strokeWidth=".9" /></svg></TaskItem>
        <TaskItem><svg width="24" height="24" viewBox="0 0 24 24"><circle cx="12" cy="12" r="12" fill="#6cb043" /><path d="M8 20.500L5 6.500M5.800 9c1 6 2 7.500 5 7 2.500-.5 3-2 2.200-5L11.800 5.500M13.500 13c.8 3 3.500 3.500 6 2" fill="none" stroke="#fff" strokeWidth="3" /></svg></TaskItem>
        <TaskItem $line><svg width="23" height="23" viewBox="0 0 23 23"><rect x="11" y="3" width="12" height="17" fill="#fff" /><path d="M16 6v4h4a4 4 0 1 1-4-4M14 14h7M14 17h7" stroke="#d24625" fill="none" strokeWidth="1.500" /><path d="M0 2.500L13 0v23L0 20.500z" fill="#d24625" /><path d="M4.500 16.500v-9h2.700a2.500 2.500 0 0 1 0 5.300H4.500" stroke="#fff" strokeWidth="2" fill="none" /></svg></TaskItem>
        <TaskItem $line><svg width="23" height="23" viewBox="0 0 23 23"><rect x="11" y="3" width="12" height="17" fill="#fff" /><path d="M14 6h7M14 9h7M14 12h7M14 15h7M14 18h7" stroke="#2a5699" strokeWidth="1.400" /><path d="M0 2.500L13 0v23L0 20.500z" fill="#2a5699" /><path d="M3 7.500l1.500 8L6.500 9l2 6.500 1.500-8" stroke="#fff" strokeWidth="1.500" fill="none" /></svg></TaskItem>
        <TaskItem $line><svg width="22" height="23" viewBox="0 0 22 23"><rect width="22" height="23" fill="#28a8ea" /><path d="M22 9v14H10z" fill="#6f8ee6" /><path d="M0 14L7 7l15 16H0z" fill="#153e7e" /><path d="M11 12l4-3 7 8v6H20z" fill="#3f6fd0" /><circle cx="15" cy="5.500" r="2.200" fill="#fff" /></svg></TaskItem>
        <Tray>
          <svg width="17" height="18" viewBox="0 0 17 18" {...s(1.200)}><circle cx="11" cy="4" r="2.500" /><path d="M8.500 9.500c1-3.500 5.500-3 5.500 1.500" /><circle cx="5" cy="9" r="2.500" /><path d="M1.200 16c.3-5.500 7.300-5.500 7.600 0" /></svg>
          <Slot $w={26} $ml={37}><svg width="25" height="25" viewBox="0 0 25 25"><path d="M13 1a11 11 0 1 1-11 17c8 2 14-6 11-17z" fill="#fbb90f" /><path d="M1 9.500c-1.500-3 1-5 3-4.500C5 1.500 10 2 10.500 5 14 5 14 9.500 11 9.500z" fill="#dfe9fb" /><path d="M11 24c-2-3 .500-5 3-4.500 1-3.500 6-3 6.500 0 4 0 3.500 4.500.5 4.500z" fill="#e7effc" /></svg></Slot>
          <TrayText $ml={5.5} $w={56.5} $size={14.500}>22°C</TrayText>
          <svg width="12" height="8" viewBox="0 0 12 8" {...s(1.300)}><path d="M1 7l5-5.500L11 7" /></svg>
          <Slot $ml={11}><svg width="14" height="14" viewBox="0 0 14 14" {...s(1.100)}><path d="M1 13C1 6 6 1 13 1M4 13c0-5 4-9 9-9M7 13c0-3 3-6 6-6M10 13c0-1.500 1-3 3-3" /></svg></Slot>
          <Slot $ml={7}><svg width="16" height="14" viewBox="0 0 16 14" {...s(1.100)}><path d="M1 5h2l3-3v10L3 9H1zM8.500 5c1 1 1 3 0 4M11 3c2 2 2 6 0 8M13.500 1.500c2.500 3 2.500 8 0 11" /></svg></Slot>
          <Slot $w={24} $ml={7}><svg width="23" height="13" viewBox="0 0 23 13" fill="none" stroke="#eee"><rect x=".5" y=".5" width="22" height="12" /><path d="M3 3.500h17M3 6.500h17" strokeDasharray="1.500 1.500" /><path d="M5 9.500h13" /></svg></Slot>
          <TrayText $ml={11} $w={24} $size={12.200}>POR</TrayText>
          <ClockBox>00:58<br />09/06/2023</ClockBox>
          <Slot $w={18} $ml={11}><svg width="17" height="17" viewBox="0 0 17 17"><path d="M0 1h16v11H8l-3 3v-3H0z" fill="#fff" /><path d="M3 4h10M3 6.500h10M3 9h6" stroke="#1d1d1d" strokeWidth="1.200" /><circle cx="12.500" cy="12.500" r="3.500" fill="#1d1d1d" stroke="#fff" /><path d="M10.500 14.500l4-4" stroke="#fff" /></svg></Slot>
          <ShowDesktop />
        </Tray>
      </Taskbar>
    </Desktop>
  );
}
